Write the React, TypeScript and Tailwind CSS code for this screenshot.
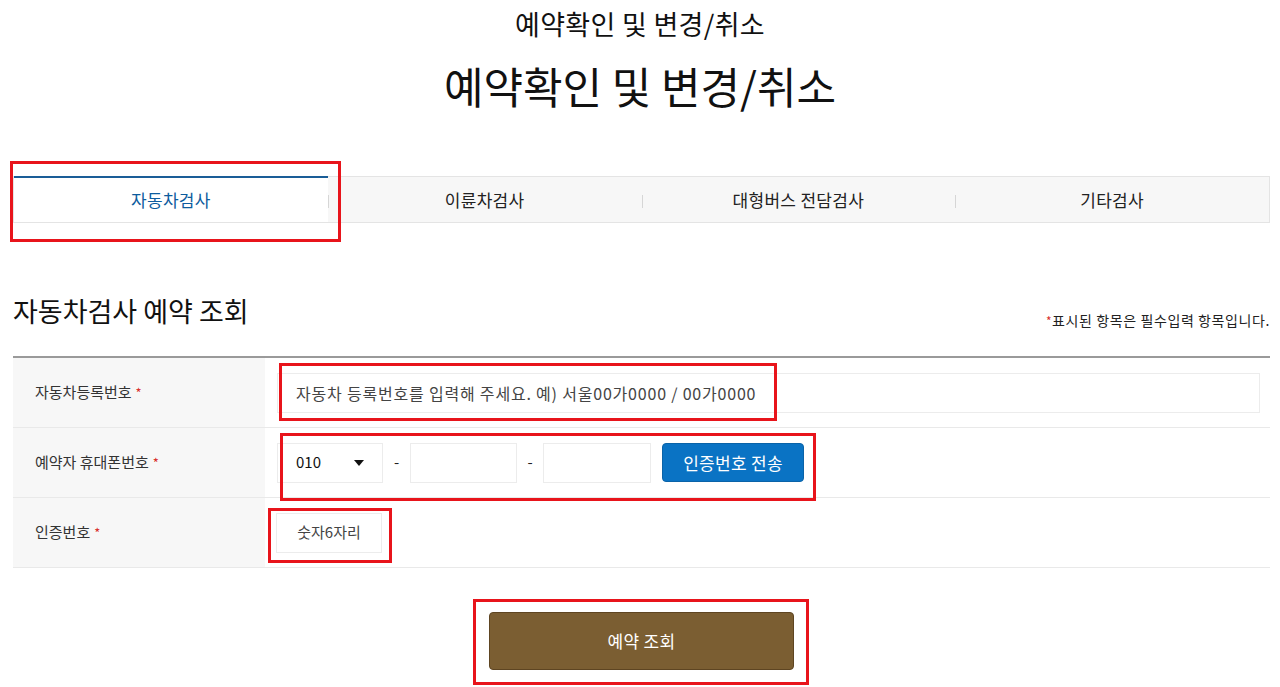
import React from 'react';

const tabs = ['자동차검사', '이륜차검사', '대형버스 전담검사', '기타검사'];

const Req = () => <span className="text-[#d9302b] text-[13px] ml-1">*</span>;

const Mark = ({ className }: { className: string }) => (
  <div className={`absolute border-[3px] border-[#e8141b] pointer-events-none ${className}`} />
);

const App: React.FC = () => {
  return (
    <div className="w-[1280px] h-[687px] bg-white text-[#222] font-['Malgun_Gothic','Noto_Sans_CJK_KR',sans-serif] overflow-hidden">
      {/* page titles */}
      <h2 className="text-center text-[27px] leading-[30px] pt-[9px] text-[#111] tracking-[0.3px]">예약확인 및 변경/취소</h2>
      <h1 className="text-center text-[43px] leading-[52px] mt-[20px] text-[#111]">예약확인 및 변경/취소</h1>

      <div className="px-[13px] pr-[10px]">
        {/* tabs */}
        <div className="mt-[65px] flex h-[47px] bg-[#f7f7f7] border border-[#e4e4e4]">
          {tabs.map((t, i) => (
            <div
              key={t}
              className={`relative flex-1 flex items-center justify-center text-[17px] tracking-[0.3px] ${
                i === 0 ? 'bg-white text-[#0d5c9e] border-t-2 border-[#1a5d97] -mt-px' : 'text-[#222]'
              }`}
            >
              {t}
              {i > 0 && <span className="absolute left-0 top-[18px] h-[13px] w-px bg-[#d6d6d6]" />}
              {i === 0 && <Mark className="-left-[4px] -top-[17px] w-[331px] h-[81px]" />}
            </div>
          ))}
        </div>

        {/* section header */}
        <div className="mt-[70px] flex items-end justify-between">
          <h3 className="text-[27px] leading-[36px] text-[#111]">자동차검사 예약 조회</h3>
          <p className="text-[14px] leading-[20px] mb-[-2px] text-[#222] tracking-[0.6px]">
            <span className="text-[#d9302b] text-[12px]">*</span>표시된 항목은 필수입력 항목입니다.
          </p>
        </div>

        {/* form table */}
        <div className="mt-[27px] border-t-2 border-[#9a9a9a]">
          <div className="flex h-[70px] border-b border-[#e9e9e9]">
            <div className="w-[252px] bg-[#f7f7f7] flex items-center pl-[22px] text-[15px] text-[#333]">
              자동차등록번호<Req />
            </div>
            <div className="flex-1 flex items-center pl-[12px] pr-[10px]">
              <div className="relative flex-1 h-[40px] border border-[#ececec] flex items-center pl-[18px] text-[16px] tracking-[0.8px] text-[#444]">
                자동차 등록번호를 입력해 주세요. 예) 서울00가0000 / 00가0000
                <Mark className="left-[1px] -top-[11px] w-[498px] h-[58px]" />
              </div>
            </div>
          </div>

          <div className="flex h-[70px] border-b border-[#e9e9e9]">
            <div className="w-[252px] bg-[#f7f7f7] flex items-center pl-[22px] text-[15px] text-[#333]">
              예약자 휴대폰번호<Req />
            </div>
            <div className="relative flex-1 flex items-center pl-[12px]">
              <div className="w-[106px] h-[40px] border border-[#ececec] flex items-center justify-between pl-[18px] pr-[18px] text-[15px] text-[#111]">
                010
                <svg width="10" height="6" viewBox="0 0 10 6"><path d="M0 0h10L5 6z" fill="#111" /></svg>
              </div>
              <span className="w-[27px] text-[15px] text-center">-</span>
              <div className="w-[107px] h-[40px] border border-[#ececec]" />
              <span className="w-[26px] text-[15px] text-center">-</span>
              <div className="w-[108px] h-[40px] border border-[#ececec]" />
              <button className="ml-[11px] w-[142px] h-[39px] rounded-[4px] bg-[#0a73c4] border border-[#0a63a8] text-white text-[17px] tracking-[0.3px]">
                인증번호 전송
              </button>
              <Mark className="left-[15px] top-[5px] w-[536px] h-[68px]" />
            </div>
          </div>

          <div className="flex h-[70px] border-b border-[#e9e9e9]">
            <div className="w-[252px] bg-[#f7f7f7] flex items-center pl-[22px] text-[15px] text-[#333]">
              인증번호<Req />
            </div>
            <div className="flex-1 flex items-center pl-[11px]">
              <div className="relative w-[106px] h-[40px] border border-[#ececec] flex items-center justify-center text-[15px] text-[#444]">
                숫자6자리
                <Mark className="-left-[9px] -top-[6px] w-[124px] h-[55px]" />
              </div>
            </div>
          </div>
        </div>

        {/* submit */}
        <div className="mt-[44px] flex justify-center">
          <div className="relative">
            <button className="w-[305px] h-[58px] rounded-[4px] bg-[#7b5e32] border border-[#5e4522] text-white text-[17px] tracking-[0.3px]">
              예약 조회
            </button>
            <Mark className="-left-[16px] -top-[13px] w-[336px] h-[86px]" />
          </div>
        </div>
      </div>
    </div>
  );
};

export default App;
